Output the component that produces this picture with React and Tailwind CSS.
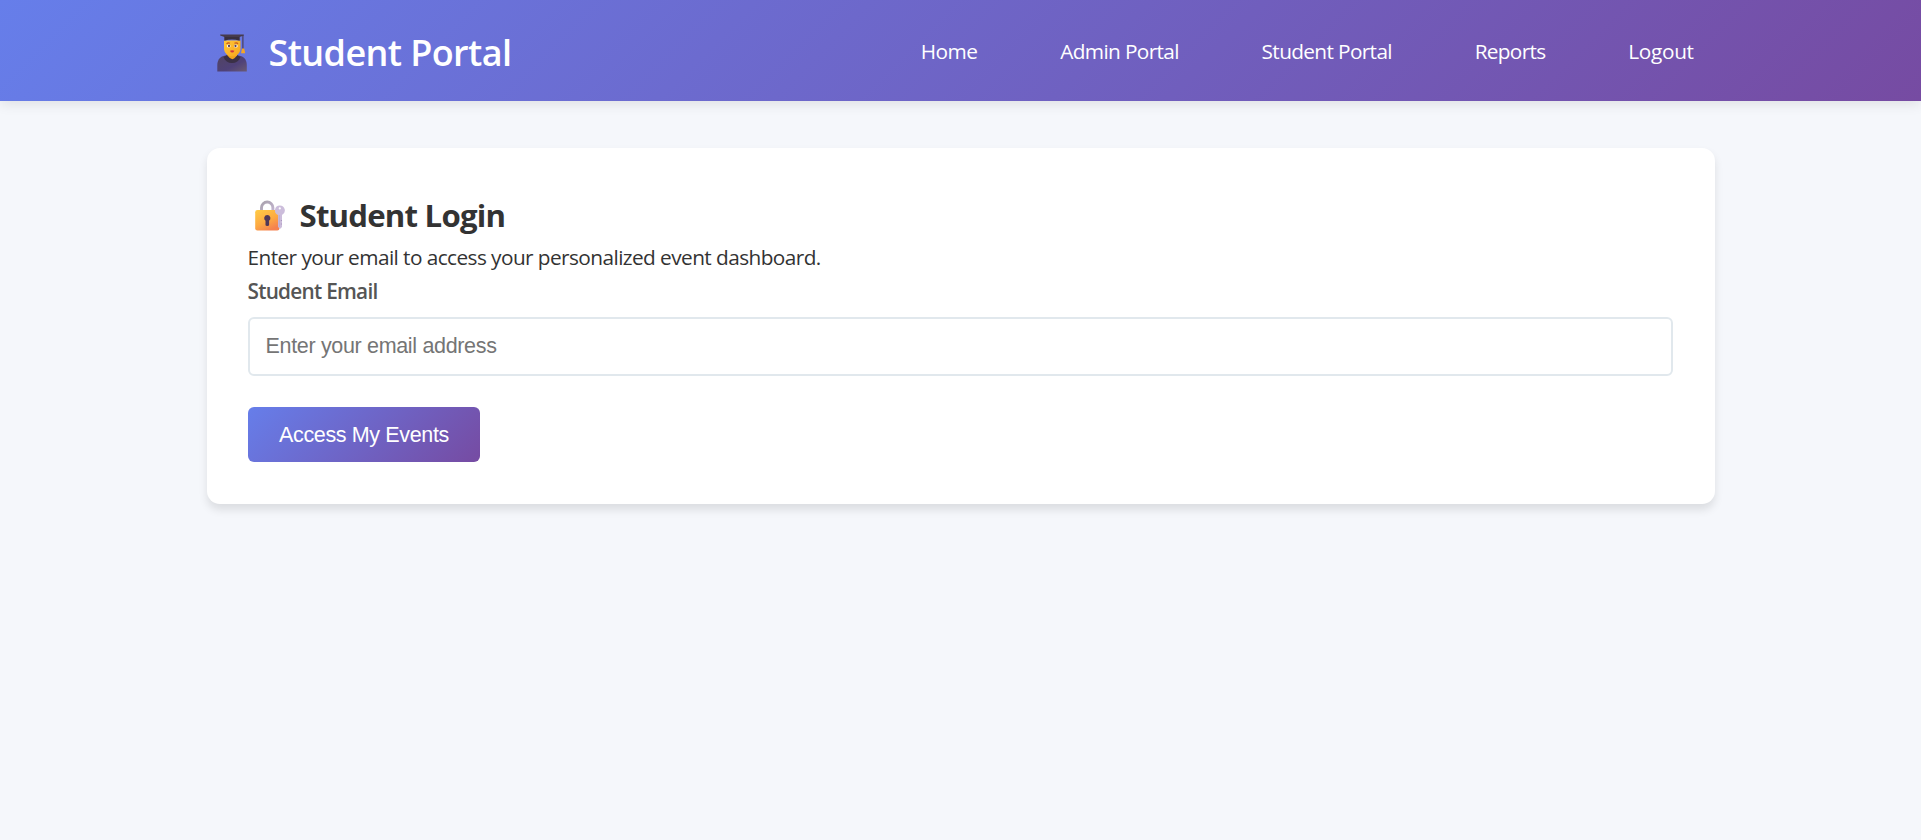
const links = [
  { label: 'Home', tracking: 'tracking-[-0.5px]' },
  { label: 'Admin Portal', tracking: 'tracking-[-0.64px]' },
  { label: 'Student Portal', tracking: 'tracking-[-0.64px]' },
  { label: 'Reports', tracking: 'tracking-[-0.7px]' },
  { label: 'Logout', tracking: 'tracking-[-0.3px]' },
];

function StudentIcon() {
  return (
    <svg width="30" height="38" viewBox="0 0 30 38" className="mt-[4px] shrink-0" aria-hidden="true">
      <defs>
        <linearGradient id="gown" x1="0" y1="0" x2="1" y2="1">
          <stop offset="0" stopColor="#514462" />
          <stop offset="0.6" stopColor="#4f4178" />
          <stop offset="1" stopColor="#6a5a72" />
        </linearGradient>
        <linearGradient id="face" x1="0" y1="0" x2="1" y2="1">
          <stop offset="0" stopColor="#ffc83a" />
          <stop offset="1" stopColor="#f7a51c" />
        </linearGradient>
      </defs>
      <path d="M0.3 37.5V31c0-5.500 3.500-9.500 9-9.500h11.500c5.500 0 9 4 9 9.500v6.500z" fill="url(#gown)" />
      <path d="M6.500 23c1.500 4 4.500 6 8.500 6s7-2 8.500-6l-3.500-2h-10z" fill="#3a3046" />
      <path d="M10.500 18h9.500v3.500c-1.500 2-3 3.200-4.700 3.800-2-.8-3.800-2.300-4.800-3.800z" fill="#eea31c" />
      <path d="M7 6.500h16.500V14c0 5-3.500 8.300-8.200 8.300S7 19 7 14z" fill="url(#face)" />
      <path d="M9.500 9.700q1.700-1.400 3.500-.5M17.500 9.200q2-.9 3.500.5" stroke="#c9571c" strokeWidth="1.200" fill="none" />
      <ellipse cx="11.700" cy="12" rx="1.900" ry="1.500" fill="#fff" />
      <ellipse cx="18.800" cy="12" rx="1.900" ry="1.500" fill="#fff" />
      <circle cx="12" cy="12" r="1.150" fill="#5c4260" />
      <circle cx="18.500" cy="12" r="1.150" fill="#5c4260" />
      <path d="M13 16.700q2.200-.7 4.400 0-.7 1.900-2.200 1.900T13 16.700z" fill="#cf3340" />
      <path d="M7.300 2h15.400v4.800q-7.700-2.800-15.400 0z" fill="#39303f" />
      <path d="M3.200.5h23.600v1L22.500 3H7.500L3.200 1.500z" fill="#463b4c" />
      <path d="M25.900 1v14" stroke="#463b55" strokeWidth="1.100" />
      <path d="M25 14.500h2.200l1 4.800h-4.200z" fill="#f5a623" />
    </svg>
  );
}

function LockIcon() {
  return (
    <svg width="30" height="31" viewBox="0 0 30 31" className="mt-px shrink-0" aria-hidden="true">
      <defs>
        <linearGradient id="lockBody" x1="0" y1="0" x2="0.6" y2="1">
          <stop offset="0" stopColor="#ffcc45" />
          <stop offset="0.6" stopColor="#fdaa42" />
          <stop offset="1" stopColor="#f58150" />
        </linearGradient>
        <linearGradient id="shackle" x1="0" y1="0" x2="1" y2="1">
          <stop offset="0" stopColor="#a9a2ad" />
          <stop offset="1" stopColor="#c3b4d0" />
        </linearGradient>
      </defs>
      <path d="M6.500 11.500V7.700a5.700 5.700 0 0 1 11.400 0v3.800" fill="none" stroke="url(#shackle)" strokeWidth="2.900" />
      <rect x="0.200" y="10" width="24.300" height="20.500" rx="2.200" fill="url(#lockBody)" />
      <path d="M12.300 14.900a3.200 3.200 0 0 1 1.800 5.800v4.200q0 1-1.800 1t-1.800-1v-4.200a3.200 3.200 0 0 1 1.800-5.800z" fill="#503858" />
      <path
        fillRule="evenodd"
        d="M24.800 5.400a5 5 0 0 1 2.200 9.500V27l-1.700 1.800-2.300-1.700V15A5 5 0 0 1 24.800 5.400zM24.800 7.300a1.100 1.100 0 1 0 0 2.200 1.100 1.100 0 0 0 0-2.200z"
        fill="#ccbddb"
      />
      <path d="M24.200 15v12" stroke="#b5a4cb" strokeWidth="0.800" />
      <path d="M27 20.500h-1.200M27 24h-1.200" stroke="#a996bd" strokeWidth="1" />
    </svg>
  );
}

export default function App() {
  return (
    <div className="min-h-screen bg-[#f5f7fb] font-['Open_Sans',sans-serif] text-[20.8px] text-[#333]">
      <header className="h-[101px] bg-[linear-gradient(135deg,#667eea_0%,#764ba2_100%)] text-white shadow-[0_2.600px_13px_rgba(0,0,0,0.1)]">
        <div className="mx-auto flex h-full w-[1508px] items-center justify-between">
          <div className="flex items-center pl-[10px]">
            <StudentIcon />
            <h1 className="ml-[22px] pt-[5px] text-[36px] leading-[50px] font-semibold tracking-[-0.6px] whitespace-nowrap">
              Student Portal
            </h1>
          </div>
          <nav className="flex gap-[41.6px] pt-px pr-[20.8px]">
            {links.map((link) => (
              <a key={link.label} href="#" className={`pl-[20.8px] not-last:pr-[20.4px] leading-[33px] whitespace-nowrap ${link.tracking}`}>
                {link.label}
              </a>
            ))}
          </nav>
        </div>
      </header>

      <main className="mx-auto mt-[47px] w-[1508px] rounded-[13px] bg-white pt-[41px] pr-[42px] pb-[42px] pl-[41px] shadow-[0_5.200px_8px_rgba(0,0,0,0.1)]">
        <div className="flex h-[52px] items-center pl-[7px]">
          <LockIcon />
          <h2 className="ml-[15px] text-[31.2px] leading-[52px] font-bold tracking-[-0.8px] whitespace-nowrap">
            Student Login
          </h2>
        </div>
        <p className="h-[33px] leading-[33px] tracking-[-0.57px]">
          Enter your email to access your personalized event dashboard.
        </p>
        <form>
          <label htmlFor="email" className="block h-[33px] leading-[34px] font-semibold tracking-[-0.75px] text-[#555]">
            Student Email
          </label>
          <input
            id="email"
            type="email"
            placeholder="Enter your email address"
            className="mt-[10px] block h-[59px] w-full rounded-[6px] border-2 border-[#e1e8ed] px-[16px] font-['Liberation_Sans',Arial,sans-serif] text-[21.5px] tracking-[-0.33px] outline-none placeholder:text-[#757575]"
          />
          <button
            type="button"
            className="mt-[31px] block h-[55px] w-[232px] rounded-[6px] bg-[linear-gradient(135deg,#667eea_0%,#764ba2_100%)] pt-[2px] pl-px font-['Liberation_Sans',Arial,sans-serif] text-[21.5px] tracking-[-0.36px] text-white"
          >
            Access My Events
          </button>
        </form>
      </main>
    </div>
  );
}
